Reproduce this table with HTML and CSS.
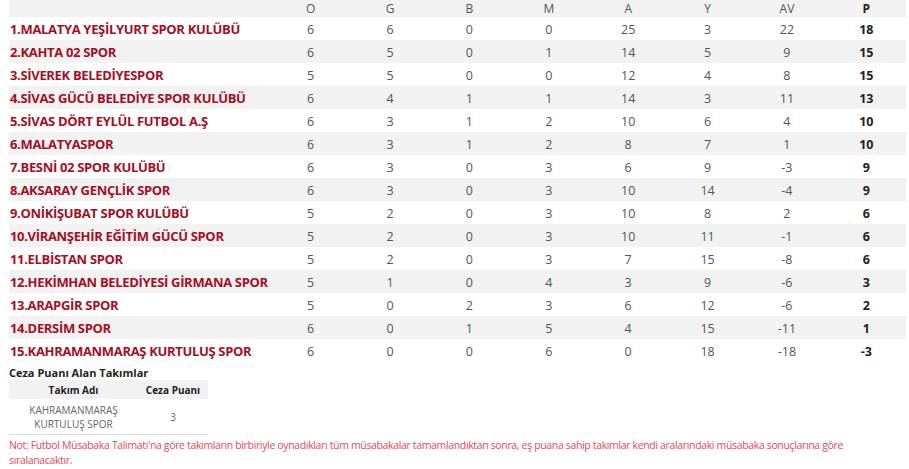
FILE: index.html
```html
<!DOCTYPE html>
<html lang="tr">
<head>
<meta charset="utf-8">
<link rel="stylesheet" href="styles.css">
</head>
<body>
<div class="page">
<table class="standings">
<thead>
<tr><th class="team"></th><th>O</th><th>G</th><th>B</th><th>M</th><th>A</th><th>Y</th><th>AV</th><th class="pts">P</th></tr>
</thead>
<tbody>
<tr><td class="team">1.MALATYA YEŞİLYURT SPOR KULÜBÜ</td><td>6</td><td>6</td><td>0</td><td>0</td><td>25</td><td>3</td><td>22</td><td class="pts">18</td></tr>
<tr><td class="team">2.KAHTA 02 SPOR</td><td>6</td><td>5</td><td>0</td><td>1</td><td>14</td><td>5</td><td>9</td><td class="pts">15</td></tr>
<tr><td class="team">3.SİVEREK BELEDİYESPOR</td><td>5</td><td>5</td><td>0</td><td>0</td><td>12</td><td>4</td><td>8</td><td class="pts">15</td></tr>
<tr><td class="team">4.SİVAS GÜCÜ BELEDİYE SPOR KULÜBÜ</td><td>6</td><td>4</td><td>1</td><td>1</td><td>14</td><td>3</td><td>11</td><td class="pts">13</td></tr>
<tr><td class="team">5.SİVAS DÖRT EYLÜL FUTBOL A.Ş</td><td>6</td><td>3</td><td>1</td><td>2</td><td>10</td><td>6</td><td>4</td><td class="pts">10</td></tr>
<tr><td class="team">6.MALATYASPOR</td><td>6</td><td>3</td><td>1</td><td>2</td><td>8</td><td>7</td><td>1</td><td class="pts">10</td></tr>
<tr><td class="team">7.BESNİ 02 SPOR KULÜBÜ</td><td>6</td><td>3</td><td>0</td><td>3</td><td>6</td><td>9</td><td>-3</td><td class="pts">9</td></tr>
<tr><td class="team">8.AKSARAY GENÇLİK SPOR</td><td>6</td><td>3</td><td>0</td><td>3</td><td>10</td><td>14</td><td>-4</td><td class="pts">9</td></tr>
<tr><td class="team">9.ONİKİŞUBAT SPOR KULÜBÜ</td><td>5</td><td>2</td><td>0</td><td>3</td><td>10</td><td>8</td><td>2</td><td class="pts">6</td></tr>
<tr><td class="team">10.VİRANŞEHİR EĞİTİM GÜCÜ SPOR</td><td>5</td><td>2</td><td>0</td><td>3</td><td>10</td><td>11</td><td>-1</td><td class="pts">6</td></tr>
<tr><td class="team">11.ELBİSTAN SPOR</td><td>5</td><td>2</td><td>0</td><td>3</td><td>7</td><td>15</td><td>-8</td><td class="pts">6</td></tr>
<tr><td class="team">12.HEKİMHAN BELEDİYESİ GİRMANA SPOR</td><td>5</td><td>1</td><td>0</td><td>4</td><td>3</td><td>9</td><td>-6</td><td class="pts">3</td></tr>
<tr><td class="team">13.ARAPGİR SPOR</td><td>5</td><td>0</td><td>2</td><td>3</td><td>6</td><td>12</td><td>-6</td><td class="pts">2</td></tr>
<tr><td class="team">14.DERSİM SPOR</td><td>6</td><td>0</td><td>1</td><td>5</td><td>4</td><td>15</td><td>-11</td><td class="pts">1</td></tr>
<tr><td class="team">15.KAHRAMANMARAŞ KURTULUŞ SPOR</td><td>6</td><td>0</td><td>0</td><td>6</td><td>0</td><td>18</td><td>-18</td><td class="pts">-3</td></tr>
</tbody>
</table>
<div class="penalty-title">Ceza Puanı Alan Takımlar</div>
<table class="penalty">
<thead><tr><th class="pname">Takım Adı</th><th class="pval">Ceza Puanı</th></tr></thead>
<tbody><tr><td class="pname">KAHRAMANMARAŞ<br>KURTULUŞ SPOR</td><td class="pval">3</td></tr></tbody>
</table>
<p class="note">Not: Futbol Müsabaka Talimatı'na göre takımların birbiriyle oynadıkları tüm müsabakalar tamamlandıktan sonra, eş puana sahip takımlar kendi aralarındaki müsabaka sonuçlarına göre sıralanacaktır.</p>
</div>
</body>
</html>
```
FILE: styles.css
```css
html, body {
  margin: 0;
  padding: 0;
  background: #fff;
}
.page {
  padding: 0 3px 0 9px;
  font-family: "Open Sans", "Liberation Sans", sans-serif;
}
.standings {
  width: 897px;
  border-collapse: collapse;
  table-layout: fixed;
}
.standings th, .standings td {
  padding: 0;
  text-align: center;
  font-size: 12.5px;
  color: #555;
  font-weight: 400;
}
.standings th {
  height: 17px;
  line-height: 17px;
  font-size: 12px;
  background: #f2f2f2;
  vertical-align: top;
}
.standings td {
  height: 21px;
  padding-top: 2px;
  line-height: 21px;
}
.standings th.team, .standings td.team {
  width: 262px;
  text-align: left;
}
.standings td.team {
  padding-left: 1px;
  font-weight: 700;
  font-size: 13px;
  letter-spacing: -0.33px;
  color: #a50e24;
  white-space: nowrap;
}
.standings tbody tr:nth-child(even) td {
  background: #f2f2f2;
}
.standings td.pts, .standings th.pts {
  font-weight: 700;
  color: #222;
}
.penalty-title {
  margin-top: 4px;
  font-size: 11px;
  font-weight: 700;
  color: #222;
  line-height: 14px;
}
.penalty {
  margin-top: 0;
  border-collapse: collapse;
  width: 199px;
  table-layout: fixed;
}
.penalty th {
  background: #f2f2f2;
  font-size: 10px;
  font-weight: 700;
  color: #222;
  height: 19px;
  padding: 0;
}
.penalty td {
  font-size: 10px;
  color: #666;
  text-align: center;
  padding: 4px 0 3px;
  line-height: 14px;
  border-bottom: 1px solid #ddd;
}
.penalty .pname { width: 129px; }
.penalty .pval { width: 70px; }
.note {
  margin: 3px 0 0;
  font-size: 10.5px;
  letter-spacing: -0.35px;
  line-height: 15px;
  color: #e4475e;
  width: 870px;
}
```
